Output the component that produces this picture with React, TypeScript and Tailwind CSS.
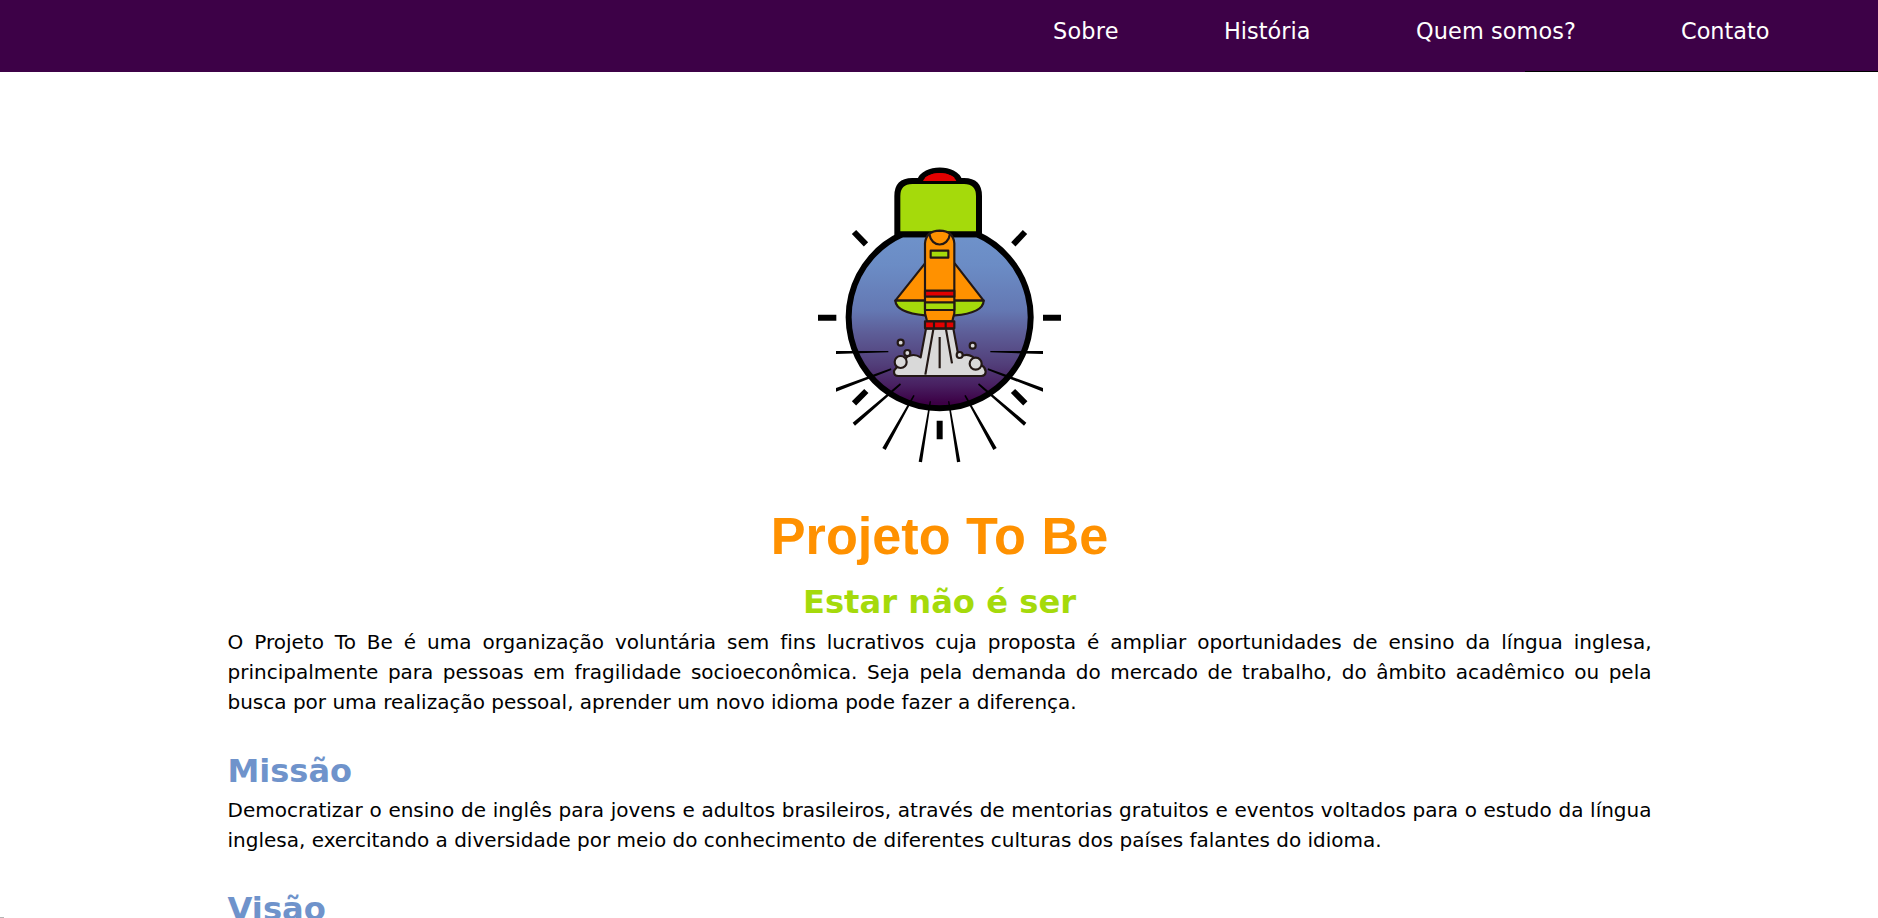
const nav = [
  { label: 'Sobre', box: 'w-[66px] mr-[105px] tracking-[0.2px]' },
  { label: 'História', box: 'w-[87px] mr-[105px]' },
  { label: 'Quem somos?', box: 'w-[160px] mr-[105px] tracking-[0.1px]' },
  { label: 'Contato', box: 'w-[88px]' },
];

function Logo() {
  return (
    <svg className="block h-[320px] w-[280px]" viewBox="0 0 840 960" fill="none" stroke="#000">
      <defs>
        <linearGradient id="sky" gradientUnits="userSpaceOnUse" x1="0" y1="240" x2="0" y2="775">
          <stop offset="0" stopColor="#6f93cb" />
          <stop offset="0.2" stopColor="#6b8cc5" />
          <stop offset="0.45" stopColor="#6478b3" />
          <stop offset="0.58" stopColor="#5d5d97" />
          <stop offset="0.75" stopColor="#523f7a" />
          <stop offset="0.87" stopColor="#482061" />
          <stop offset="0.97" stopColor="#3c0045" />
        </linearGradient>
      </defs>
      <path d="M307 253A273 273 0 1 0 531 253Z" fill="url(#sky)" strokeWidth="18" />
      <path d="M292 253V138Q292 93 337 93H492Q537 93 537 138V253Z" fill="#a5da0b" strokeWidth="18" />
      <path d="M359 94C372 51 467 51 479 94Z" fill="#e30000" strokeWidth="17" strokeLinejoin="round" transform="translate(0 -1)" />
      <path d="M337 94H492" strokeWidth="15" />
      <path d="M369 93C382 62 456 62 469 93Z" fill="#e30000" stroke="none" />
      <g strokeWidth="18">
        <path d="M54 503H109M729 503H783M419 812V868M162 246L198 283M675 246L640 283M199 723L162 760M639 723L676 760" />
      </g>
      <g fill="#000" stroke="none">
        <path d="M108 603L265 603V607L108 612ZM729 603L571 603V607L729 612Z" />
        <path d="M108 714L273 655L274 660L108 725ZM729 714L564 655L563 660L729 725Z" />
        <path d="M158 818L300 700L303 704L165 827ZM679 818L537 700L534 704L672 827Z" />
        <path d="M247 894L340 735L344 737L257 900ZM590 894L497 735L493 737L580 900Z" />
        <path d="M356 935L389 754H393L366 937ZM481 935L448 754H444L471 937Z" />
      </g>
      <g stroke="#231815" strokeWidth="6.5" strokeLinejoin="round">
        <path d="M378 536L362 622Q342 609 322 620L288 655Q282 661 282 665Q282 678 295 678H544Q557 678 557 664Q556 652 545 646L517 620Q500 608 476 622L460 536Z" fill="#d9d9d9" />
        <g fill="#d9d9d9">
          <circle cx="302" cy="578" r="9" />
          <circle cx="322" cy="609" r="9" />
          <circle cx="302" cy="636" r="18" />
          <circle cx="518" cy="587" r="9" />
          <circle cx="479" cy="615" r="9" />
          <circle cx="527" cy="641" r="18" />
        </g>
        <path d="M375 340L286 452H551L464 340Z" fill="#ff9100" />
        <path d="M286 452C288 480 330 492 375 496H464C510 492 550 480 551 452Z" fill="#a5da0b" />
        <path d="M375 280Q378 243 419 242Q460 243 463 280V490Q459 505 457 514H381Q379 505 375 490Z" fill="#ff9100" />
        <path d="M388 252C394 294 444 294 450 252" />
        <path d="M392 302H445V323H392Z" fill="#a5da0b" />
        <path d="M375 422H463V440H375Z" fill="#e30000" />
        <path d="M375 457H463V480H375Z" fill="#a5da0b" />
        <path d="M375 514H463V535H375ZM402 514V535M437 514V535" fill="#e30000" />
        <path d="M400 538L376 674M419 561V655M438 538L456 640" />
      </g>
    </svg>
  );
}

export default function App() {
  return (
    <div className="relative h-[918px] w-full overflow-hidden bg-white font-['DejaVu_Sans',sans-serif] text-black [font-variant-ligatures:none]">
      <header className="bg-[#3d0147]">
        <div className="flex h-[71px] justify-end pt-[14px] pr-[109px]">
          <nav className="flex text-[22.4px] leading-[34px] whitespace-nowrap text-white">
            {nav.map((n) => (
              <a key={n.label} className={n.box}>{n.label}</a>
            ))}
          </nav>
        </div>
        <div className="ml-auto h-px w-[353px] bg-black" />
      </header>
      <main className="mx-auto w-[1425px] pl-px">
        <div className="flex justify-center pt-[78px] pl-px"><Logo /></div>
        <h1 className="mt-[36px] text-center font-['Liberation_Sans',sans-serif] text-[52.2px] leading-[60px] font-bold text-[#ff9100] [word-spacing:1px]">Projeto To Be</h1>
        <h2 className="mt-[12px] text-center text-[32.2px] leading-[49px] font-bold text-[#a5da0b]">Estar não é ser</h2>
        <p className="text-justify text-[20px] leading-[30px]">
          O Projeto To Be é uma organização voluntária sem fins lucrativos cuja proposta é ampliar oportunidades de ensino da língua inglesa, principalmente para pessoas em fragilidade socioeconômica. Seja pela demanda do mercado de trabalho, do âmbito acadêmico ou pela busca por uma realização pessoal, aprender um novo idioma pode fazer a diferença.
        </p>
        <h2 className="mt-[30px] text-[32px] leading-[48px] font-bold text-[#6f93cb]">Missão</h2>
        <p className="text-justify text-[20px] leading-[30px]">
          Democratizar o ensino de inglês para jovens e adultos brasileiros, através de mentorias gratuitos e eventos voltados para o estudo da língua inglesa, exercitando a diversidade por meio do conhecimento de diferentes culturas dos países falantes do idioma.
        </p>
        <h2 className="mt-[30px] text-[32.2px] leading-[48px] font-bold text-[#6f93cb]">Visão</h2>
      </main>
      <div className="absolute bottom-0 left-0 h-px w-1 bg-[#b5b5b5]" />
    </div>
  );
}
